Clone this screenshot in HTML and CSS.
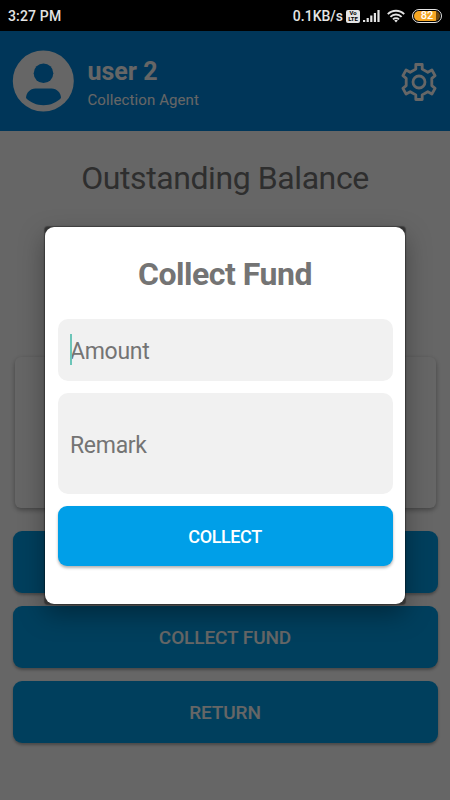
FILE: index.html
```html
<!DOCTYPE html>
<html lang="en">
<head>
    <meta charset="UTF-8">
    <meta name="viewport" content="width=device-width, initial-scale=1.0">
    <title>Collect Fund</title>
    <link rel="stylesheet" href="styles.css">
</head>
<body>
    <div class="status-bar">
        <span class="time">3:27 PM</span>
        <div class="status-icons">
            <span class="speed">0.1KB/s</span>
            <span class="volte"><span>Vo</span><span>LTE</span></span>
            <svg class="signal" width="17" height="12" viewBox="0 0 17 12" fill="#e4e4e4">
                <rect x="0" y="10" width="2.2" height="2"/>
                <rect x="3.6" y="8" width="2.2" height="4"/>
                <rect x="7.2" y="5.5" width="2.2" height="6.5"/>
                <rect x="10.8" y="3" width="2.2" height="9"/>
                <rect x="14.4" y="0" width="2.2" height="12"/>
            </svg>
            <svg class="wifi" width="18" height="14" viewBox="0 0 18 14" fill="none" stroke="#e4e4e4" stroke-width="1.9">
                <path d="M.8 5.2a11.6 11.6 0 0 1 16.4 0"/>
                <path d="M3.4 7.900a7.900 7.900 0 0 1 11.200 0"/>
                <path d="M6 10.400a4.300 4.300 0 0 1 6 0"/>
                <path d="M7.200 11.600a2.500 2.500 0 0 1 3.600 0L9 13.600z" fill="#e4e4e4" stroke="none"/>
            </svg>
            <span class="battery"><span class="battery-level">82</span></span>
        </div>
    </div>

    <div class="screen">
        <div class="header">
            <svg class="avatar" width="62" height="62" viewBox="0 0 62 62">
                <circle cx="31.300" cy="31" r="30.500" fill="#fff"/>
                <circle cx="31.500" cy="23.300" r="9.800" fill="#0087de"/>
                <path d="M14 48c0-5 4-9.500 9.500-9.500h16c5.500 0 9.500 4.500 9.500 9.500-4.500 4.700-10.500 7.200-17.500 7.200S18.500 52.700 14 48z" fill="#0087de"/>
            </svg>
            <div class="user">
                <div class="user-name">user 2</div>
                <div class="user-role">Collection Agent</div>
            </div>
            <svg class="settings" width="36" height="38" viewBox="0 0 36 38" fill="none" stroke="#fff" stroke-width="2.800" stroke-linejoin="round">
                <path d="M14.800 1.500h6.400v4.600l5.600 3.200 4.100-2.300 3.200 5.600-3.300 2.700v7.400l3.300 2.700-3.200 5.600-4.100-2.300-5.600 3.200v4.600h-6.400v-4.600l-5.600-3.200-4.100 2.300-3.200-5.600 3.300-2.700v-7.400l-3.300-2.700 3.200-5.600 4.100 2.300 5.600-3.200z"/>
                <circle cx="18" cy="19" r="6"/>
            </svg>
        </div>

        <div class="content">
            <div class="balance-title">Outstanding Balance</div>
            <div class="card"></div>
            <div class="actions">
                <button class="btn"></button>
                <button class="btn">Collect Fund</button>
                <button class="btn">Return</button>
            </div>
        </div>

        <div class="overlay">
            <div class="dialog-window">
                <div class="dialog">
                    <div class="dialog-title">Collect Fund</div>
                    <div class="field amount"><span class="cursor"></span>Amount</div>
                    <div class="field remark">Remark</div>
                    <button class="btn collect">Collect</button>
                </div>
            </div>
        </div>
    </div>
</body>
</html>
```
FILE: styles.css
```css
* {
    margin: 0;
    padding: 0;
    box-sizing: border-box;
}

body {
    font-family: Roboto, sans-serif;
    background: #000;
    width: 450px;
    height: 800px;
    overflow: hidden;
}

.status-bar {
    height: 31px;
    padding: 1px 8px 0;
    display: flex;
    align-items: center;
    justify-content: space-between;
    color: #e4e4e4;
    font-size: 14px;
    font-weight: 500;
}

.time {
    letter-spacing: 0.15px;
}

.status-icons {
    display: flex;
    align-items: center;
}

.speed {
    margin-right: 1px;
}

.volte {
    width: 14px;
    height: 13px;
    margin: 0 3px 0 2px;
    border-radius: 2px;
    background: #e4e4e4;
    color: #000;
    display: flex;
    flex-direction: column;
    align-items: center;
    justify-content: center;
    font-size: 6px;
    font-weight: 700;
    line-height: 6px;
}

.wifi {
    margin: 0 7px 0 7px;
}

.battery {
    width: 30px;
    height: 14px;
    padding: 1px;
    border: 1.5px solid #e4e4e4;
    border-radius: 7px;
    display: flex;
}

.battery-level {
    flex: 1;
    border-radius: 5px;
    background: linear-gradient(90deg, #f5a623 84%, #6b4710 84%);
    color: #fff;
    font-size: 11px;
    font-weight: 500;
    line-height: 10px;
    text-align: center;
}

.screen {
    position: relative;
    height: 769px;
    background: #fff;
}

.header {
    height: 100px;
    padding: 0 13px 0 12px;
    background: #0087de;
    color: #fff;
    display: flex;
    align-items: center;
}

.user {
    flex: 1;
    padding: 4px 0 0 13.5px;
}

.user-name {
    font-size: 25px;
    font-weight: 700;
    line-height: 30px;
}

.user-role {
    margin-top: 3px;
    font-size: 15px;
    line-height: 20px;
    letter-spacing: 0.1px;
}

.settings {
    margin-top: 2px;
}

.content {
    padding: 24px 12.5px 0;
}

.balance-title {
    height: 46px;
    color: #747474;
    font-size: 32px;
    line-height: 47px;
    letter-spacing: -0.42px;
    text-align: center;
}

.card {
    height: 151px;
    margin: 156px 2px 0;
    border-radius: 6px;
    background: #fff;
    box-shadow: 0 2px 5px rgba(0, 0, 0, 0.35);
}

.actions {
    margin-top: 23px;
    display: flex;
    flex-direction: column;
    gap: 13px;
}

.btn {
    height: 62px;
    border: none;
    border-radius: 9px;
    background: #009fe8;
    box-shadow: 0 2px 3px rgba(0, 0, 0, 0.3);
    color: #fff;
    font-family: inherit;
    font-size: 19px;
    font-weight: 500;
    letter-spacing: -0.1px;
    text-transform: uppercase;
}

.overlay {
    position: absolute;
    inset: 0;
    padding-top: 196px;
    background: rgba(0, 0, 0, 0.6);
    display: flex;
    align-items: flex-start;
    justify-content: center;
}

/* square dark window behind the rounded dialog */
.dialog-window {
    width: 360px;
    background: #333;
    border-radius: 3px;
    box-shadow: 0 0 1px 1px rgba(0, 0, 0, 0.35), 0 10px 26px rgba(0, 0, 0, 0.35);
}

.dialog {
    height: 377px;
    padding: 24px 12.5px 0;
    border-radius: 9px;
    background: #fff;
    display: flex;
    flex-direction: column;
}

.dialog-title {
    height: 46px;
    margin-bottom: 22px;
    color: #747474;
    font-size: 32px;
    font-weight: 700;
    line-height: 46px;
    letter-spacing: -0.48px;
    text-align: center;
}

.field {
    margin-bottom: 12px;
    padding-left: 12.5px;
    border-radius: 10px;
    background: #f1f1f1;
    color: #747474;
    font-size: 23px;
    letter-spacing: -0.3px;
    display: flex;
    align-items: center;
}

.amount {
    position: relative;
    height: 62px;
    padding-top: 2px;
}

.cursor {
    position: absolute;
    left: 12.5px;
    top: 15px;
    width: 2px;
    height: 31px;
    background: #6cc5b8;
}

.remark {
    height: 101px;
    padding-top: 3px;
}

.collect {
    height: 60px;
    font-size: 18px;
    letter-spacing: -0.4px;
}
```
